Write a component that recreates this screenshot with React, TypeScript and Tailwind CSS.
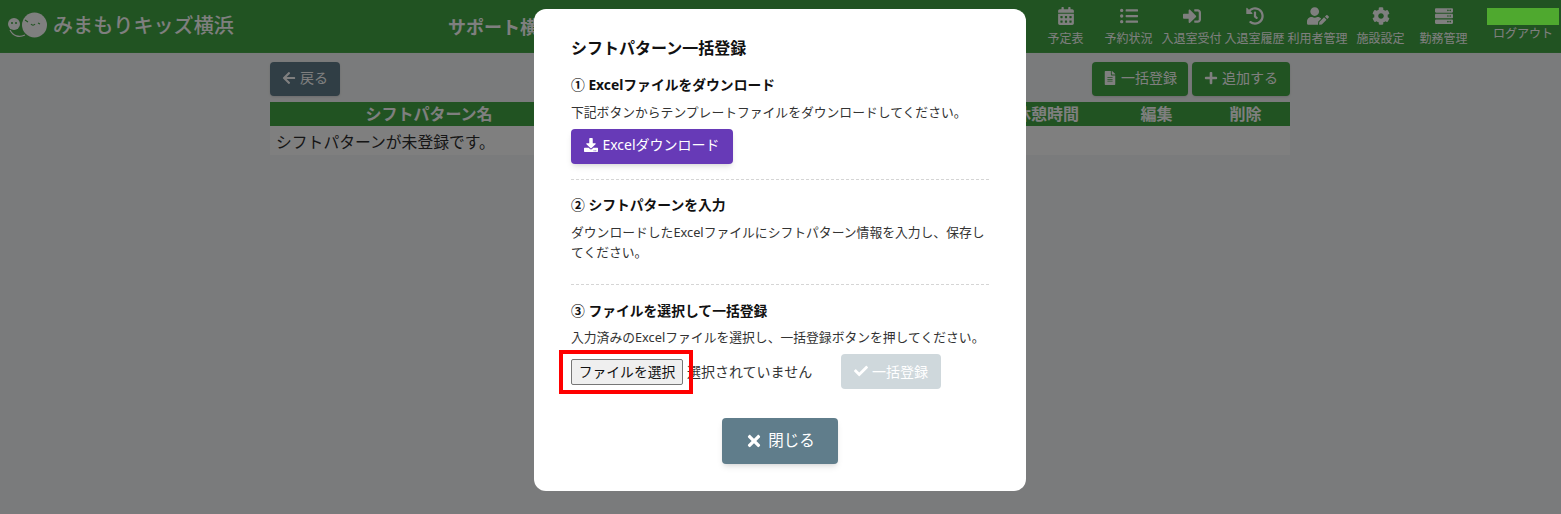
import type { ReactNode } from "react";
import { FaArrowLeft, FaCalendarAlt, FaCheck, FaCog, FaDownload, FaFileAlt, FaHistory, FaHome, FaListUl, FaPlus, FaServer, FaSignInAlt, FaTimes, FaUserEdit, FaUsers } from "react-icons/fa";

const navItems = [
  { label: "ホーム", icon: <FaHome /> },
  { label: "利用者", icon: <FaUsers /> },
  { label: "予定表", icon: <FaCalendarAlt /> },
  { label: "予約状況", icon: <FaListUl /> },
  { label: "入退室受付", icon: <FaSignInAlt /> },
  { label: "入退室履歴", icon: <FaHistory /> },
  { label: "利用者管理", icon: <FaUserEdit className="text-[22px] mt-[-2px]" /> },
  { label: "施設設定", icon: <FaCog /> },
  { label: "勤務管理", icon: <FaServer /> },
];

function Logo() {
  return (
    <div className="flex items-center pl-2 w-[448px]">
      <svg width="40" height="28" viewBox="0 0 40 28" className="shrink-0">
        <circle cx="26.5" cy="13" r="12.5" fill="#fff" />
        <circle cx="6" cy="12" r="6" fill="#fff" />
        <path d="M2 18c3 6 9 8 15 5" fill="none" stroke="#fff" strokeWidth="1.2" />
        <circle cx="4" cy="11" r="1" fill="#42a644" />
        <circle cx="8" cy="11" r="1" fill="#42a644" />
        <path d="M17 8l3 2M23 12c1 1.5 3 1.5 4 0M30 11l2 1" fill="none" stroke="#42a644" strokeWidth="1.1" />
      </svg>
      <span className="ml-[5px] text-[20px] font-medium tracking-[0.1px] leading-none whitespace-nowrap text-white">みまもりキッズ横浜</span>
    </div>
  );
}

function Header() {
  return (
    <header className="flex h-[52px] bg-[#42a644] text-white border-b border-[#4aa84c] box-content">
      <Logo />
      <div className="flex-1 pt-[14px] text-[18px] font-bold leading-[26px] whitespace-nowrap overflow-hidden">サポート横浜センター</div>
      <nav className="flex pt-[7px]">
        {navItems.map((item) => (
          <div key={item.label} className="flex flex-col items-center w-[63px]">
            <span className="text-[18px] h-[18px]">{item.icon}</span>
            <span className="mt-[5px] text-[12px] leading-[18px] whitespace-nowrap">{item.label}</span>
          </div>
        ))}
      </nav>
      <div className="w-[72px] ml-[12px] mr-[2px] pt-[8px] flex flex-col items-center">
        <div className="relative z-20 h-[17px] w-[72px] bg-[#4fa92f]"></div>
        <span className="mt-[-1px] text-[12px] leading-[20px] whitespace-nowrap">ログアウト</span>
      </div>
    </header>
  );
}

function PageButton({ className, children }: { className: string; children: ReactNode }) {
  return (
    <button className={`flex items-center justify-center gap-[4px] h-[34px] pb-[3px] rounded-[4px] text-[14px] text-white shadow-sm ${className}`}>
      {children}
    </button>
  );
}

function ShiftTable() {
  return (
    <div className="mt-[6px]">
      <div className="grid grid-cols-[318px_1fr_130px_89px_89px] h-[24px] bg-[#42a644] text-white text-[16px] font-bold leading-[24px] text-center">
        <div>シフトパターン名</div>
        <div></div>
        <div>休憩時間</div>
        <div>編集</div>
        <div>削除</div>
      </div>
      <div className="h-[29px] px-[6px] bg-[#fff] opacity-[.95] text-[15.8px] leading-[32px] text-[#222]">シフトパターンが未登録です。</div>
    </div>
  );
}

function StepHeading({ mark, text }: { mark: string; text: string }) {
  return (
    <h3 className="text-[13.8px] font-bold leading-[21px] text-[#111]">
      {mark} {text}
    </h3>
  );
}

function BulkModal() {
  return (
    <div className="fixed inset-0 z-10 bg-black/50 flex justify-center pt-[9px] pr-[1px]">
      <div className="relative w-[492px] h-[482px] bg-white rounded-[12px] px-[37px] pt-[27px]">
        <h2 className="text-[16px] font-bold leading-[24px] text-[#111]">シフトパターン一括登録</h2>

        <div className="mt-[14px] pb-[15px] border-b border-dashed border-[#d5d5d5]">
          <StepHeading mark="①" text="Excelファイルをダウンロード" />
          <p className="mt-[7px] text-[12.8px] leading-[20.5px] text-[#333]">下記ボタンからテンプレートファイルをダウンロードしてください。</p>
          <button className="mt-[6px] flex items-center justify-center gap-[4px] w-[162px] h-[35px] pb-[3px] rounded-[4px] bg-[#673ab7] text-white text-[14px] shadow-md">
            <FaDownload className="text-[14px]" />
            Excelダウンロード
          </button>
        </div>

        <div className="mt-[14px] pb-[21px] border-b border-dashed border-[#d5d5d5]">
          <StepHeading mark="②" text="シフトパターンを入力" />
          <p className="mt-[7px] text-[12.8px] leading-[20.5px] text-[#333]">ダウンロードしたExcelファイルにシフトパターン情報を入力し、保存してください。</p>
        </div>

        <div className="mt-[15px]">
          <StepHeading mark="③" text="ファイルを選択して一括登録" />
          <p className="mt-[6px] text-[12.8px] leading-[20.5px] text-[#333]">入力済みのExcelファイルを選択し、一括登録ボタンを押してください。</p>
          <div className="mt-[7px] flex items-center h-[35px]">
            <div className="relative flex items-center">
              <button className="w-[112px] h-[26px] rounded-[2px] border border-[#767676] bg-[#efefef] text-[13.8px] leading-[24px] text-[#111]">ファイルを選択</button>
              <span className="absolute left-[-12px] top-[-9px] w-[134px] h-[44px] border-[4px] border-[#f00]"></span>
            </div>
            <span className="ml-[4px] w-[154px] text-[14px] text-[#333] whitespace-nowrap">選択されていません</span>
            <button className="flex items-center justify-center gap-[4px] w-[100px] h-[35px] pb-[1px] rounded-[4px] bg-[#cfd8dc] text-white text-[14px]">
              <FaCheck className="text-[14px]" />
              一括登録
            </button>
          </div>
        </div>

        <div className="mt-[29px] flex justify-center">
          <button className="flex items-center justify-center gap-[5px] w-[116px] h-[46px] rounded-[4px] bg-[#607d8b] text-white text-[15.5px] shadow-md">
            <FaTimes className="text-[18px]" />
            閉じる
          </button>
        </div>
      </div>
    </div>
  );
}

export default function App() {
  return (
    <div className="h-screen overflow-hidden bg-[#f5f7f8] font-['Noto_Sans','Noto_Sans_CJK_JP',sans-serif]">
      <Header />
      <main className="w-[1020px] ml-[270px] pt-[9px]">
        <div className="flex justify-between">
          <PageButton className="w-[70px] bg-[#607d8b]">
            <FaArrowLeft className="text-[14px]" />
            戻る
          </PageButton>
          <div className="flex gap-[4px]">
            <PageButton className="w-[96px] bg-[#42a644]">
              <FaFileAlt className="text-[14px]" />
              一括登録
            </PageButton>
            <PageButton className="w-[98px] bg-[#42a644]">
              <FaPlus className="text-[14px]" />
              追加する
            </PageButton>
          </div>
        </div>
        <ShiftTable />
      </main>
      <BulkModal />
    </div>
  );
}
